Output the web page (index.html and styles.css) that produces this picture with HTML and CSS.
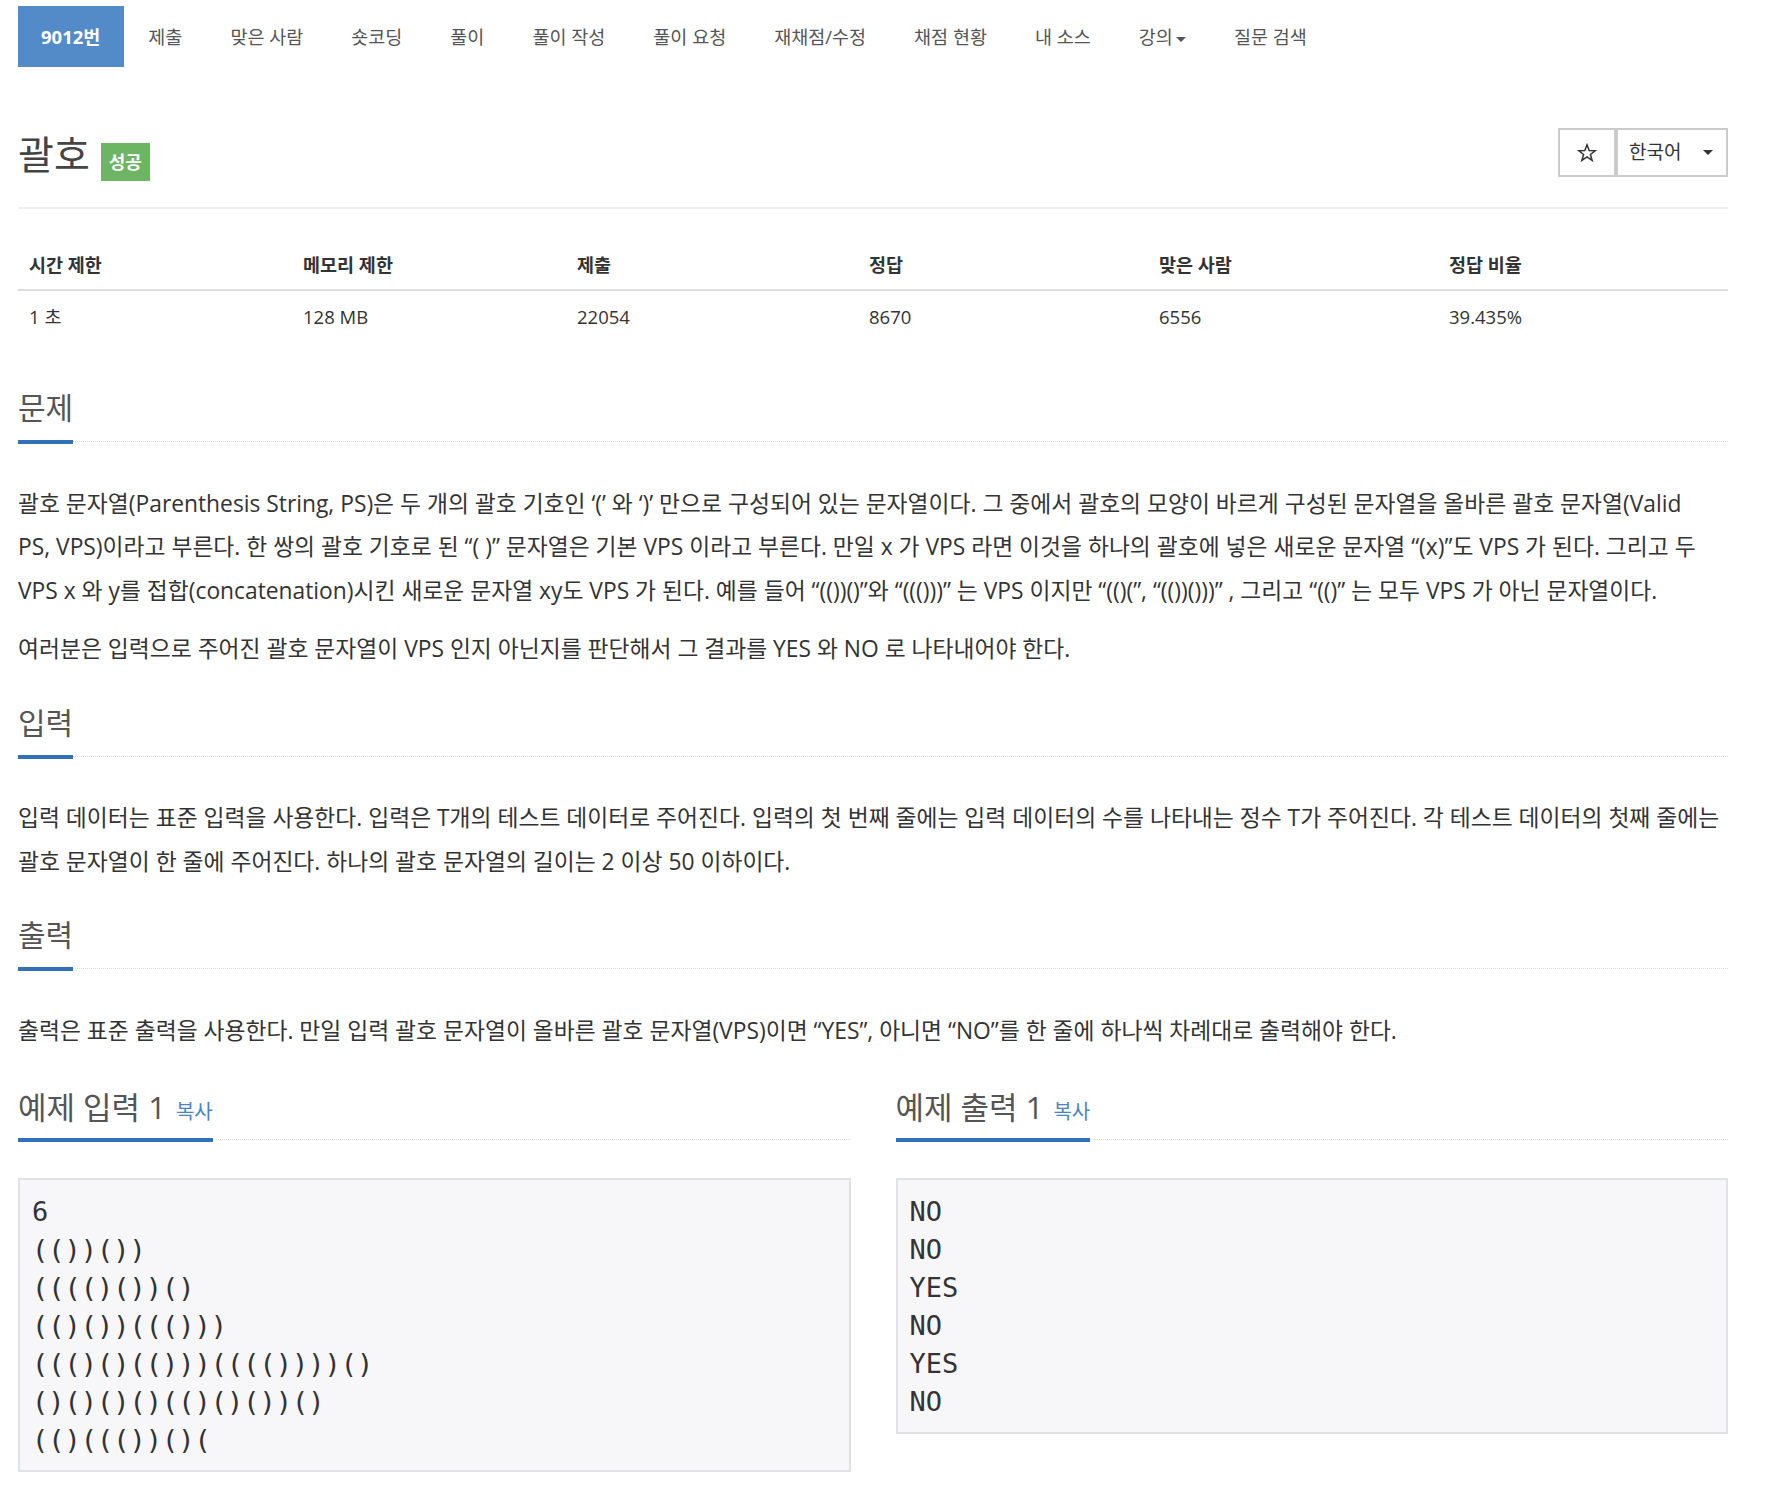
FILE: index.html
```html
<!DOCTYPE html>
<html lang="ko">
<head>
<meta charset="utf-8">
<title>9012번: 괄호</title>
<link rel="stylesheet" href="styles.css">
</head>
<body>
<div class="container">
  <ul class="nav">
    <li class="nav-item active"><a>9012번</a></li>
    <li class="nav-item"><a>제출</a></li>
    <li class="nav-item"><a>맞은 사람</a></li>
    <li class="nav-item"><a>숏코딩</a></li>
    <li class="nav-item"><a>풀이</a></li>
    <li class="nav-item"><a>풀이 작성</a></li>
    <li class="nav-item"><a>풀이 요청</a></li>
    <li class="nav-item"><a>재채점/수정</a></li>
    <li class="nav-item"><a>채점 현황</a></li>
    <li class="nav-item"><a>내 소스</a></li>
    <li class="nav-item"><a>강의<span class="caret nav-caret"></span></a></li>
    <li class="nav-item"><a>질문 검색</a></li>
  </ul>

  <div class="page-header">
    <h1 class="title"><span class="title-text">괄호</span><span class="label">성공</span></h1>
    <div class="btn-group">
      <button class="btn btn-star" type="button">
        <svg class="star-icon" width="20" height="20" viewBox="0 0 24 24"><polygon points="12,2.2 14.6,9.1 21.9,9.3 16.1,13.8 18.2,20.9 12,16.7 5.8,20.9 7.9,13.8 2.1,9.3 9.4,9.1" fill="none" stroke="#333" stroke-width="1.8" stroke-linejoin="miter"/></svg>
      </button>
      <button class="btn btn-lang" type="button">한국어<span class="caret lang-caret"></span></button>
    </div>
  </div>

  <table class="info">
    <colgroup>
      <col class="c1"><col class="c2"><col class="c3"><col class="c4"><col class="c5"><col class="c6">
    </colgroup>
    <thead>
      <tr><th>시간 제한</th><th>메모리 제한</th><th>제출</th><th>정답</th><th>맞은 사람</th><th>정답 비율</th></tr>
    </thead>
    <tbody>
      <tr><td>1 초</td><td>128 MB</td><td>22054</td><td>8670</td><td>6556</td><td>39.435%</td></tr>
    </tbody>
  </table>

  <section class="problem-section">
    <div class="headline"><h2>문제</h2></div>
    <p>괄호 문자열(Parenthesis String, PS)은 두 개의 괄호 기호인 ‘(’ 와 ‘)’ 만으로 구성되어 있는 문자열이다. 그 중에서 괄호의 모양이 바르게 구성된 문자열을 올바른 괄호 문자열(Valid<br>PS, VPS)이라고 부른다. 한 쌍의 괄호 기호로 된 “( )” 문자열은 기본 VPS 이라고 부른다. 만일 x 가 VPS 라면 이것을 하나의 괄호에 넣은 새로운 문자열 “(x)”도 VPS 가 된다. 그리고 두<br>VPS x 와 y를 접합(concatenation)시킨 새로운 문자열 xy도 VPS 가 된다. 예를 들어 “(())()”와 “((()))” 는 VPS 이지만 “(()(”, “(())()))” , 그리고 “(()” 는 모두 VPS 가 아닌 문자열이다.</p>
    <p>여러분은 입력으로 주어진 괄호 문자열이 VPS 인지 아닌지를 판단해서 그 결과를 YES 와 NO 로 나타내어야 한다.</p>
  </section>

  <section class="problem-section">
    <div class="headline"><h2>입력</h2></div>
    <p>입력 데이터는 표준 입력을 사용한다. 입력은 T개의 테스트 데이터로 주어진다. 입력의 첫 번째 줄에는 입력 데이터의 수를 나타내는 정수 T가 주어진다. 각 테스트 데이터의 첫째 줄에는<br>괄호 문자열이 한 줄에 주어진다. 하나의 괄호 문자열의 길이는 2 이상 50 이하이다.</p>
  </section>

  <section class="problem-section">
    <div class="headline"><h2>출력</h2></div>
    <p>출력은 표준 출력을 사용한다. 만일 입력 괄호 문자열이 올바른 괄호 문자열(VPS)이면 “YES”, 아니면 “NO”를 한 줄에 하나씩 차례대로 출력해야 한다.</p>
  </section>

  <div class="samples">
    <div class="sample">
      <div class="headline sample-headline"><h2>예제 입력 1 <a class="copy">복사</a></h2></div>
      <pre class="sample-data">6
(())())
(((()())()
(()())((()))
((()()(()))(((())))()
()()()()(()()())()
(()((())()(</pre>
    </div>
    <div class="sample">
      <div class="headline sample-headline"><h2>예제 출력 1 <a class="copy">복사</a></h2></div>
      <pre class="sample-data">NO
NO
YES
NO
YES
NO</pre>
    </div>
  </div>
</div>
</body>
</html>
```

FILE: styles.css
```css
html, body {
  margin: 0;
  padding: 0;
  background: #fff;
}

body {
  font-family: "Open Sans", "Noto Sans CJK KR", sans-serif;
  color: #333;
  font-size: 18px;
  line-height: 25px;
}

.container {
  padding: 0 46px 40px 18px;
}

/* ---------- nav ---------- */
.nav {
  display: flex;
  list-style: none;
  margin: 6px 0 0;
  padding: 0;
}

.nav-item a {
  display: block;
  padding: 18px 24px;
  font-size: 18.5px;
  line-height: 25px;
  color: #555;
  cursor: pointer;
}

.nav-item.active a {
  background: #538bc8;
  color: #fff;
  font-weight: bold;
  padding: 18px 24px 18px 23px;
}

.caret {
  display: inline-block;
  width: 0;
  height: 0;
  border-top: 5px solid #555;
  border-left: 5px solid transparent;
  border-right: 5px solid transparent;
  vertical-align: middle;
}

.nav-caret {
  margin-left: 3px;
}

/* ---------- header ---------- */
.page-header {
  display: flex;
  justify-content: space-between;
  align-items: flex-start;
  margin-top: 61px;
  padding-bottom: 26px;
  border-bottom: 2px solid #eee;
}

.title {
  display: flex;
  align-items: flex-start;
  margin: 5px 0 0;
  font-size: 39px;
  line-height: 42px;
  font-weight: normal;
  color: #444;
}

.label {
  display: inline-block;
  margin: 10px 0 0 11px;
  padding: 7px 8px;
  font-size: 18px;
  line-height: 24px;
  font-weight: bold;
  color: #fff;
  background: #6db563;
}

.btn-group {
  display: flex;
}

.btn {
  display: flex;
  align-items: center;
  height: 49px;
  margin: 0;
  background: #fff;
  border: 2px solid #ccc;
  font-family: "Open Sans", "Noto Sans CJK KR", sans-serif;
  font-size: 19px;
  line-height: 25px;
  color: #333;
  cursor: pointer;
}

.btn-star {
  width: 58px;
  justify-content: center;
  padding: 0;
}

.btn-lang {
  width: 112px;
  padding: 0 13px 0 11px;
  justify-content: space-between;
}

.lang-caret {
  border-top-color: #333;
}

/* ---------- info table ---------- */
.info {
  width: 100%;
  margin: 30px 0 50px;
  border-collapse: collapse;
  table-layout: fixed;
}

.info .c1, .info .c2 { width: 274px; }
.info .c3 { width: 292px; }
.info .c4, .info .c5, .info .c6 { width: 290px; }

.info th {
  text-align: left;
  font-weight: bold;
  font-size: 18.5px;
  padding: 12.5px 11px;
  line-height: 25px;
  border-bottom: 2px solid #ddd;
}

.info td {
  font-size: 18.5px;
  padding: 12.5px 11px;
  line-height: 25px;
}

/* ---------- sections ---------- */
.problem-section {
  padding-bottom: 20px;
}

.headline {
  display: flex;
  border-bottom: 1px dotted #d9dee6;
  margin-bottom: 39.5px;
}

.headline h2 {
  margin: 0 0 -3px;
  padding-bottom: 16px;
  font-size: 30px;
  line-height: 33px;
  font-weight: normal;
  color: #555;
  border-bottom: 4px solid #3071b8;
}

.problem-section p {
  margin: 0 0 15px;
  font-size: 22.8px;
  line-height: 43.5px;
  word-break: keep-all;
  white-space: nowrap;
}

/* ---------- samples ---------- */
.samples {
  display: grid;
  grid-template-columns: 1fr 1fr;
  gap: 45px;
}

.sample-headline {
  margin-top: 4px;
  margin-bottom: 38px;
}

.sample-headline h2 {
  font-size: 31px;
  padding-bottom: 10px;
}

.copy {
  font-size: 20px;
  color: #4a84c6;
  margin-left: 2px;
  cursor: pointer;
}

.sample-data {
  margin: 0;
  padding: 13px 12px 11px;
  border: 2px solid #e1e1e8;
  background: #f7f7f9;
  font-family: "DejaVu Sans Mono", monospace;
  font-size: 27px;
  line-height: 38px;
  color: #333;
}
```
